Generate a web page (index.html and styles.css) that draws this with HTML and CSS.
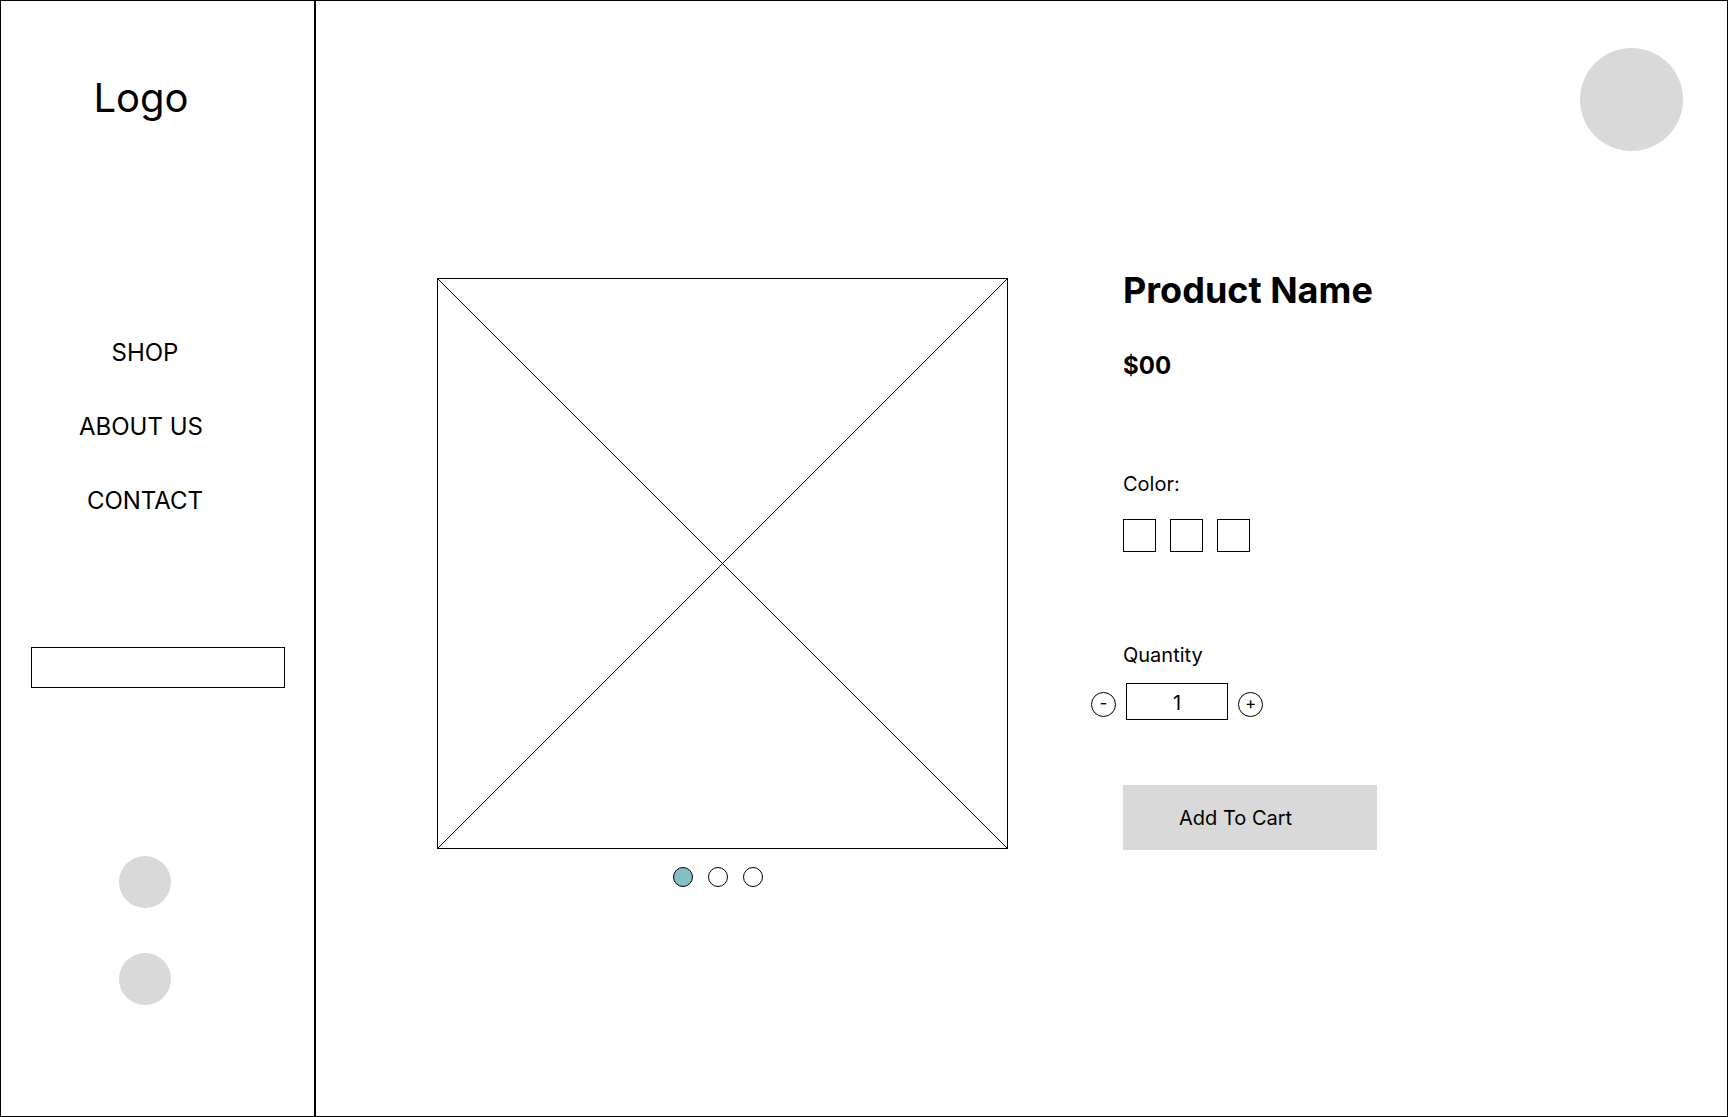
FILE: index.html
```html
<!DOCTYPE html>
<html lang="en">
<head>
    <meta charset="UTF-8">
    <meta name="viewport" content="width=device-width, initial-scale=1.0">
    <title>Product Page - Wireframe</title>
    <link rel="stylesheet" href="styles.css">
</head>
<body>
    <div class="frame">
        <aside class="sidebar">
            <div class="logo">Logo</div>

            <nav class="nav">
                <a href="#" class="nav-link">SHOP</a>
                <a href="#" class="nav-link nav-about">ABOUT US</a>
                <a href="#" class="nav-link">CONTACT</a>
            </nav>

            <input type="text" class="search" aria-label="Search">

            <div class="socials">
                <span class="social"></span>
                <span class="social"></span>
            </div>
        </aside>

        <main class="main">
            <header class="topbar">
                <span class="avatar"></span>
            </header>

            <section class="product">
                <div class="gallery">
                    <svg class="placeholder" width="571" height="571" viewBox="0 0 571 571">
                        <rect x="0.5" y="0.5" width="570" height="570" fill="none" stroke="#000" stroke-width="1"/>
                        <line x1="0.5" y1="0.5" x2="570.5" y2="570.5" stroke="#000" stroke-width="1"/>
                        <line x1="570.5" y1="0.5" x2="0.5" y2="570.5" stroke="#000" stroke-width="1"/>
                    </svg>
                    <div class="dots">
                        <span class="dot active"></span>
                        <span class="dot"></span>
                        <span class="dot"></span>
                    </div>
                </div>

                <div class="info">
                    <h1 class="name">Product Name</h1>
                    <div class="price">$00</div>

                    <div class="label label-color">Color:</div>
                    <div class="swatches">
                        <button class="swatch" aria-label="Color 1"></button>
                        <button class="swatch" aria-label="Color 2"></button>
                        <button class="swatch" aria-label="Color 3"></button>
                    </div>

                    <div class="label label-qty">Quantity</div>
                    <div class="qty">
                        <button class="qty-btn" id="minus">-</button>
                        <input type="text" class="qty-input" id="qty" value="1">
                        <button class="qty-btn" id="plus">+</button>
                    </div>

                    <button class="add-cart">Add To Cart</button>
                </div>
            </section>
        </main>
    </div>

    <script>
        // Cambiar cantidad
        const qty = document.getElementById('qty');
        document.getElementById('minus').addEventListener('click', () => {
            qty.value = Math.max(1, (parseInt(qty.value) || 1) - 1);
        });
        document.getElementById('plus').addEventListener('click', () => {
            qty.value = (parseInt(qty.value) || 0) + 1;
        });
    </script>
</body>
</html>
```

FILE: styles.css
```css
* {
    box-sizing: border-box;
}
body {
    margin: 0;
    font-family: Inter, "Noto Sans", Arial, sans-serif;
    color: #000;
    background: #fff;
}
.frame {
    width: 1728px;
    height: 1117px;
    border: 1px solid #000;
    display: flex;
}
.sidebar {
    width: 315px;
    flex-shrink: 0;
    border-right: 2px solid #000;
    padding: 77px 29px 0 30px;
    display: flex;
    flex-direction: column;
}
.logo {
    font-size: 40px;
    line-height: 1;
    text-align: center;
    margin-right: 34px;
}
.nav {
    display: flex;
    flex-direction: column;
    gap: 50px;
    margin-top: 223px;
    margin-right: 26px;
    text-align: center;
}
.nav-link {
    font-size: 24px;
    line-height: 1;
    color: #000;
    text-decoration: none;
}
.nav-about {
    margin-right: 8px;
}
.search {
    width: 254px;
    height: 41px;
    margin-top: 134px;
    border: 1px solid #000;
    border-radius: 0;
    padding: 0 8px;
    font: inherit;
}
.socials {
    display: flex;
    flex-direction: column;
    align-items: center;
    gap: 45px;
    margin-top: 168px;
    margin-right: 26px;
}
.social {
    width: 52px;
    height: 52px;
    border-radius: 50%;
    background-color: #d9d9d9;
}
.main {
    flex: 1;
    display: flex;
    flex-direction: column;
}
.topbar {
    display: flex;
    justify-content: flex-end;
    padding: 47px 44px 0 0;
}
.avatar {
    width: 103px;
    height: 103px;
    border-radius: 50%;
    background-color: #d9d9d9;
}
.product {
    display: flex;
    align-items: flex-start;
    gap: 115px;
    margin-top: 121px;
    padding-left: 121px;
}
.gallery {
    margin-top: 6px;
}
.placeholder {
    display: block;
}
.dots {
    display: flex;
    justify-content: center;
    gap: 15px;
    margin-top: 18px;
    padding-right: 9px;
}
.dot {
    width: 20px;
    height: 20px;
    border: 1px solid #000;
    border-radius: 50%;
    background-color: #fff;
}
.dot.active {
    background-color: #86bec4;
}
.info {
    display: flex;
    flex-direction: column;
    align-items: flex-start;
}
.name {
    margin: 0;
    font-size: 36px;
    line-height: 1;
    font-weight: 700;
}
.price {
    margin-top: 46px;
    font-size: 24px;
    line-height: 1;
    font-weight: 700;
}
.label {
    font-size: 20px;
    line-height: 1;
}
.label-color {
    margin-top: 96px;
}
.swatches {
    display: flex;
    gap: 14px;
    margin-top: 25px;
}
.swatch {
    width: 33px;
    height: 33px;
    border: 1px solid #000;
    background: #fff;
    padding: 0;
    cursor: pointer;
}
.label-qty {
    margin-top: 93px;
}
.qty {
    display: flex;
    align-items: center;
    gap: 10px;
    margin-top: 18px;
    margin-left: -32px;
}
.qty-btn {
    width: 25px;
    height: 25px;
    margin-top: 6px;
    border: 1px solid #000;
    border-radius: 50%;
    background: #fff;
    padding: 0 0 2px;
    font-family: inherit;
    font-size: 17px;
    line-height: 1;
    color: #000;
    cursor: pointer;
}
.qty-input {
    width: 102px;
    height: 37px;
    border: 1px solid #000;
    border-radius: 0;
    padding: 2px 0 0;
    text-align: center;
    font-family: inherit;
    font-size: 20px;
    color: #000;
}
.add-cart {
    width: 254px;
    height: 65px;
    margin-top: 65px;
    border: none;
    background-color: #d9d9d9;
    padding: 0 0 0 56px;
    text-align: left;
    font-family: inherit;
    font-size: 20px;
    line-height: 1;
    color: #000;
    cursor: pointer;
}
```
